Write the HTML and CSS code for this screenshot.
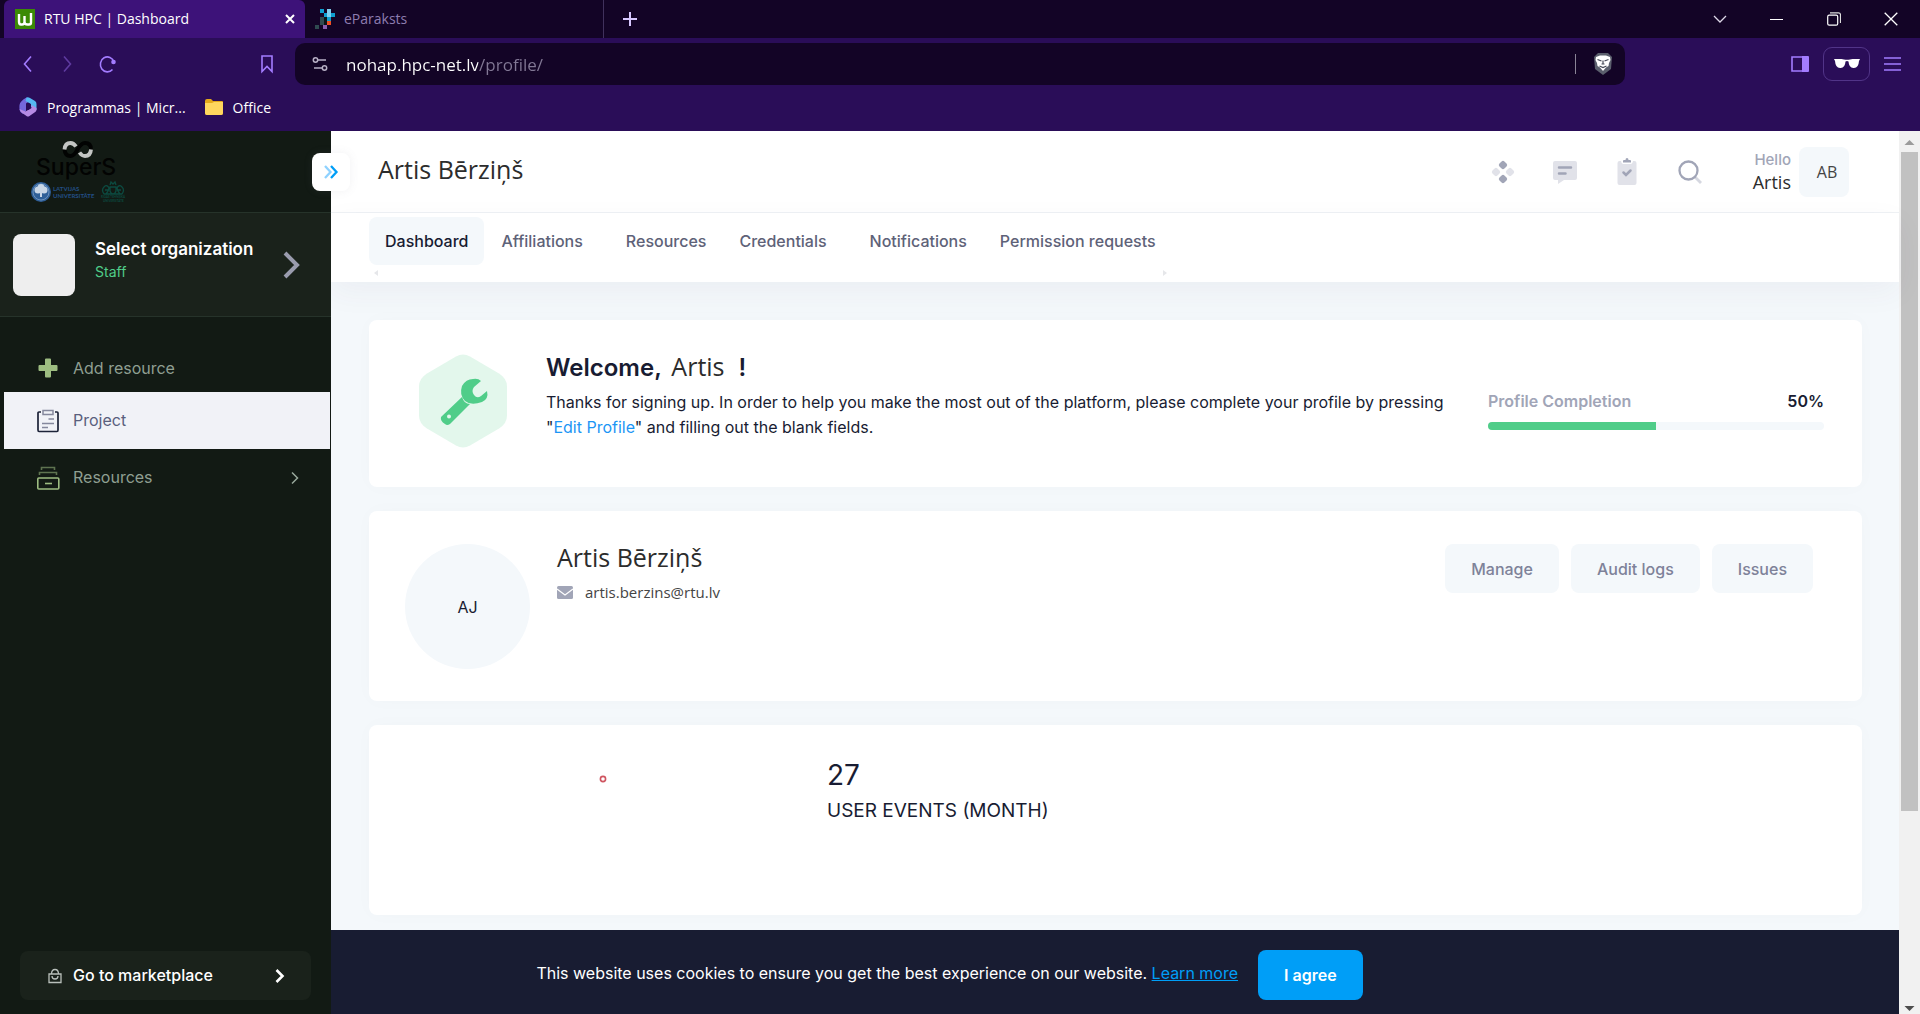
FILE: index.html
```html
<!DOCTYPE html>
<html lang="en">
<head>
<meta charset="utf-8">
<title>RTU HPC | Dashboard</title>
<link rel="stylesheet" href="styles.css">
</head>
<body>
<div class="browser">
  <header class="chrome">
    <div class="tabstrip">
      <div class="tab tab-active">
        <svg class="tab-icon" width="20" height="20" viewBox="0 0 20 20"><rect width="20" height="20" fill="#3b8a05"/><path d="M4 5v7.500q0 3 2 3h1q2.500 0 2.500-2.500V7M9.500 13q0 2.500 3 2.500H14q2 0 2-2V4" fill="none" stroke="#fff" stroke-width="2.400"/></svg>
        <span class="tab-title">RTU HPC | Dashboard</span>
        <button class="tab-close" aria-label="Close tab"><svg width="10" height="10" viewBox="0 0 10 10"><path d="M1 1l8 8M9 1l-8 8" stroke="#fff" stroke-width="2"/></svg></button>
      </div>
      <div class="tab">
        <svg class="tab-icon" width="20" height="20" viewBox="0 0 20 20" shape-rendering="crispEdges"><path fill="#0d9fd0" d="M5 0h4v4H5zM9 4h3v4H9zM16 4h4v4h-4zM12 8h4v4h-4z"/><path fill="#7fd0f0" d="M12 0h4v8h-4z"/><path fill="#2f4a50" d="M5 8h4v8H5zM0 16h4v4H0z"/><path fill="#0b1416" d="M9 8h3v8H9z"/><path fill="#f04e23" d="M12 12h4v4h-4z"/><path fill="#8a5fb0" d="M8 16h4v4H8z"/></svg>
        <span class="tab-title">eParaksts</span>
      </div>
      <button class="new-tab" aria-label="New tab"><svg width="14" height="14" viewBox="0 0 14 14"><path d="M7 0v14M0 7h14" stroke="#d8c8ff" stroke-width="2"/></svg></button>
      <div class="window-buttons">
        <button aria-label="Search tabs"><svg width="14" height="14" viewBox="0 0 14 14"><path d="M1 4l6 6 6-6" fill="none" stroke="#ddd8e8" stroke-width="1.3"/></svg></button>
        <button aria-label="Minimize"><svg width="14" height="14" viewBox="0 0 14 14"><path d="M0 7.500h13" stroke="#fff"/></svg></button>
        <button aria-label="Restore"><svg width="14" height="14" viewBox="0 0 14 14"><rect x=".7" y="3.200" width="10" height="10" rx="1.500" fill="none" stroke="#fff" stroke-width="1.200"/><path d="M3 .9h8.500a2 2 0 0 1 2 2V11" fill="none" stroke="#ddd" stroke-width="1.200"/></svg></button>
        <button aria-label="Close"><svg width="14" height="14" viewBox="0 0 14 14"><path d="M.7.7l12.600 12.600M13.300.7L.7 13.300" stroke="#fff" stroke-width="1.300"/></svg></button>
      </div>
    </div>
    <div class="toolbar">
      <div class="nav-buttons">
        <button aria-label="Back"><svg width="20" height="20" viewBox="0 0 20 20"><path d="M13 2.500L6.500 10l6.500 7.500" fill="none" stroke="#a37cff" stroke-width="1.600"/></svg></button>
        <button aria-label="Forward"><svg width="20" height="20" viewBox="0 0 20 20"><path d="M6 2.500l6.500 7.500L6 17.500" fill="none" stroke="#5f3ba0" stroke-width="1.600"/></svg></button>
        <button aria-label="Reload"><svg width="20" height="20" viewBox="0 0 20 20"><path d="M16 8A7 7.500 0 1 0 14.500 15.500" fill="none" stroke="#a37cff" stroke-width="1.600"/><circle cx="15.500" cy="8" r="2.300" fill="#a37cff"/></svg></button>
        <button class="bookmark-button" aria-label="Bookmark this page"><svg width="20" height="20" viewBox="0 0 20 20"><path d="M5 2h10v15.500l-5-5-5 5z" fill="none" stroke="#a37cff" stroke-width="1.600"/></svg></button>
      </div>
      <div class="address">
        <svg width="18" height="18" viewBox="0 0 18 18" fill="none" stroke="#b8b0c6" stroke-width="1.500"><circle cx="4.500" cy="5" r="2.200"/><path d="M7 5h8M3 13h8"/><circle cx="13.500" cy="13" r="2.200"/></svg>
        <input class="address-input" type="text" aria-label="Address" value="nohap.hpc-net.lv/profile/">
        <span class="address-divider"></span>
        <svg width="20" height="24" viewBox="0 0 20 24"><path d="M5 1h10l2 2 2 2-1 12-8 6-8-6L1 5l2-2z" fill="#5b5f6d"/><path d="M3 5l4-1.500h6L17 5l.5 3-1.500 3-.5 3-2.500 1.500L10 19l-3-3.500L4.500 14 4 11 2.500 8z" fill="#fff"/><path d="M4.500 7.500l4 1.500M15.500 7.500l-4 1.500M6.500 14l3.500 1.500 3.500-1.500M10 8.500v4M8.500 12h3" fill="none" stroke="#454957" stroke-width="1.200"/></svg>
      </div>
      <div class="tool-buttons">
        <button aria-label="Sidebar"><svg width="18" height="16" viewBox="0 0 18 16"><path d="M1 1h11v14H1z" fill="none" stroke="#a37cff" stroke-width="1.600"/><path d="M11 0h6q1 0 1 1v14q0 1-1 1h-6z" fill="#a37cff"/></svg></button>
        <button class="private" aria-label="Private window"><svg width="26" height="10" viewBox="0 0 26 10"><path d="M0 0q5-.6 10 .4 3 .8 6 0 5-1 10-.4l-1 2q-.5 7-5 7-5 .5-5.500-6.500Q13 1.500 11.500 2.500 11 9.500 6 9 1.500 9 1 2z" fill="#fff"/></svg></button>
        <button aria-label="Menu"><svg width="17" height="14" viewBox="0 0 17 14"><path d="M0 1h17M0 7h17M0 13h17" stroke="#a37cff" stroke-width="1.500"/></svg></button>
      </div>
    </div>
    <nav class="bookmarks" aria-label="Bookmarks">
      <a href="#"><svg width="20" height="20" viewBox="0 0 20 20"><path d="M8.500.5L13 3 8 6.500V14l-3 3-2.500-2Q1 13 1.500 8 2 4 8.500.5z" fill="#7468dc"/><path d="M8.500.5Q10-.2 12 1l5 3q1.500 1 1.500 3v6l-5.500-3V7L7.500 4z" fill="#55b8f2"/><path d="M18.500 11q.5 3-2 4.500L11.500 19q-1.500 1-3 0l-5-3.500Q2 14 1.500 12l6 2.500 6-3.500V8z" fill="#b68ae4"/><path d="M8 7.500l2.500-1.500 2.500 1.500v3.500L10.500 13 8 11.500z" fill="#2a0d58"/></svg><span>Programmas | Micr...</span></a>
      <a href="#"><svg width="20" height="18" viewBox="0 0 20 18"><path d="M1 3q0-2 2-2h4l2 2h9q1 0 1 1v11q0 2-2 2H3q-2 0-2-2z" fill="#e5a91a"/><path d="M1 5h7l2-1h9v11q0 2-2 2H3q-2 0-2-2z" fill="#ffd75e"/></svg><span>Office</span></a>
    </nav>
  </header>

  <div class="viewport">
    <aside class="sidebar">
      <a class="brand" href="#" aria-label="SuperS">
        <svg width="96" height="64" viewBox="0 0 96 64">
          <g fill="none" stroke-width="3.800"><path d="M33.500 9.500q.5 6.500 6 6.500 3.500 0 7-6.500t7.500-6.500q6 0 6 6.500" stroke="#020302"/><path d="M33.500 9.500q.5-6.500 6-6.500 3 0 5.500 3.500" stroke="#c4c6c4"/><path d="M48.500 12.500q2.500 3.500 5.500 3.500 5.500 0 6-6.500" stroke="#c4c6c4"/></g>
          <text class="brand-name" x="5" y="35">SuperS</text>
          <circle cx="10" cy="52" r="10" fill="#2f5f98"/><circle cx="10" cy="52" r="8" fill="none" stroke="#7d9fc6" stroke-width=".8"/><circle cx="7" cy="50" r="3.500" fill="#c9d6e6"/><circle cx="13" cy="50" r="3.500" fill="#c9d6e6"/><circle cx="10" cy="47.500" r="3.500" fill="#c9d6e6"/><path d="M9 51h2v6H9z" fill="#c9d6e6"/>
          <text class="brand-lu" x="22" y="51">LATVIJAS</text><text class="brand-lu" x="22" y="58">UNIVERSITĀTE</text>
          <g fill="none" stroke="#0c4a40" stroke-width="1.300"><path d="M73 54q-3-4 0-7t5 1q-1 4-3 6M91 54q3-4 0-7t-5 1q1 4 3 6M79 47h6v4q-1 3-3 3t-3-3zM79 45l1-3 2 2 2-2 1 3M74 50h4M86 50h4M73 54h18"/></g>
          <text class="brand-rtu" x="70" y="58">RĪGAS TEHNISKĀ</text><text class="brand-rtu" x="72" y="62">UNIVERSITĀTE</text>
        </svg>
      </a>
      <button class="organization">
        <span class="org-image"></span>
        <span class="org-text"><strong>Select organization</strong><small>Staff</small></span>
        <svg width="18" height="28" viewBox="0 0 18 28"><path d="M2 2l12 12L2 26" fill="none" stroke="#9a9cae" stroke-width="4"/></svg>
      </button>
      <nav class="menu" aria-label="Main">
        <a class="menu-item" href="#"><svg width="24" height="24" viewBox="0 0 24 24"><path d="M9 3.500q0-1 1-1h4q1 0 1 1V9h5.500q1 0 1 1v4q0 1-1 1H15v5.500q0 1-1 1h-4q-1 0-1-1V15H3.500q-1 0-1-1v-4q0-1 1-1H9z" fill="#9dbd81"/></svg><span>Add resource</span></a>
        <a class="menu-item menu-active" href="#"><svg width="24" height="24" viewBox="0 0 24 24" fill="none"><path d="M5 3H3q-1 0-1 1v17q0 1.500 1 1.500h18q1 0 1-1.500V4q0-1-1-1h-2" stroke="#1d2338" stroke-width="1.700"/><path d="M7 1.500h10v4H7zM12.500 10H18M6 14.500h12M6 18.500h6" stroke="#85889d" stroke-width="1.500"/></svg><span>Project</span></a>
        <a class="menu-item" href="#"><svg width="24" height="24" viewBox="0 0 24 24" fill="none" stroke="#9dbd81" stroke-width="1.600"><path d="M5.500 4V1.500h13V4M3.500 9V6.500h17V9" opacity=".55"/><rect x="1.800" y="12" width="21" height="11" rx="1"/><path d="M9 17.500h7"/></svg><span>Resources</span><svg class="menu-arrow" width="8" height="14" viewBox="0 0 8 14"><path d="M1 1.500L6.500 7 1 12.500" fill="none" stroke="#98a89b" stroke-width="1.500"/></svg></a>
      </nav>
      <a class="marketplace" href="#"><svg width="14" height="16" viewBox="0 0 14 16" fill="none" stroke="#b9c0bb" stroke-width="1.300"><path d="M1 6h12v8.500H1z"/><path d="M3.500 6q0-4.500 3.500-4.500T10.500 6M4 8q0 3 3 3t3-3"/></svg><span>Go to marketplace</span><svg width="10" height="16" viewBox="0 0 10 16"><path d="M1.500 2l6 6-6 6" fill="none" stroke="#fff" stroke-width="2.600"/></svg></a>
      <button class="sidebar-toggle" aria-label="Toggle sidebar"><svg width="16" height="16" viewBox="0 0 16 16" fill="none" stroke-width="2.300"><path d="M2 2l5.500 6L2 14" stroke="#8fd2ff"/><path d="M8 2l5.500 6L8 14" stroke="#009ef7"/></svg></button>
    </aside>

    <main class="main">
      <div class="header">
        <h1 class="person-name">Artis Bērziņš</h1>
        <div class="header-tools">
          <button aria-label="Quick actions"><svg width="24" height="24" viewBox="0 0 24 24"><g fill="#a1a5b7"><rect x="8.500" y="1.500" width="7" height="7" rx="2" transform="rotate(45 12 5)"/><rect x="8.500" y="15.500" width="7" height="7" rx="2" transform="rotate(45 12 19)"/></g><g fill="#e1e2e9"><rect x="1.500" y="8.500" width="7" height="7" rx="2" transform="rotate(45 5 12)"/><rect x="15.500" y="8.500" width="7" height="7" rx="2" transform="rotate(45 19 12)"/></g></svg></button>
          <button aria-label="Messages"><svg width="24" height="24" viewBox="0 0 24 24"><path d="M2 1h20q2 0 2 2v15q0 2-2 2H11l-6 4v-4H2q-2 0-2-2V3q0-2 2-2z" fill="#e1e2e9"/><path d="M6 7.500h12M6 13.500h6.500" stroke="#a1a5b7" stroke-width="2.500" stroke-linecap="round"/></svg></button>
          <button aria-label="Pending tasks"><svg width="24" height="28" viewBox="0 0 24 28"><path d="M4.500 3H6q.5 3 2.500 3h7q2 0 2.500-3h1.500q2 0 2 2v20q0 2-2 2h-15q-2 0-2-2V5q0-2 2-2z" fill="#e1e2e9"/><path d="M8 4.500V3q0-1 1-1h1.500q0-2 1.500-2t1.500 2H15q1 0 1 1v1.500z" fill="#a1a5b7"/><path d="M8.500 14.500l2.500 2.500 4.500-4.500" fill="none" stroke="#a1a5b7" stroke-width="2.500" stroke-linecap="round"/></svg></button>
          <button aria-label="Search"><svg width="26" height="26" viewBox="0 0 26 26" fill="none"><path d="M18 18l6 6" stroke="#d5d7e0" stroke-width="2.800"/><circle cx="11.500" cy="11.500" r="9" stroke="#a1a5b7" stroke-width="2.300"/></svg></button>
        </div>
        <div class="greeting"><span class="hello">Hello</span><span class="greeting-name">Artis</span></div>
        <button class="avatar-small">AB</button>
      </div>
      <div class="subheader">
        <div class="tabs-scroller">
          <nav class="tabs" aria-label="Profile">
            <a class="tabs-link tabs-active" href="#">Dashboard</a>
            <a class="tabs-link" href="#">Affiliations</a>
            <a class="tabs-link tabs-spaced" href="#">Resources</a>
            <a class="tabs-link" href="#">Credentials</a>
            <a class="tabs-link tabs-spaced" href="#">Notifications</a>
            <a class="tabs-link" href="#">Permission requests</a>
          </nav>
          <div class="tabs-arrows" aria-hidden="true">
            <svg width="4" height="6" viewBox="0 0 4 6"><path d="M4 0v6L0 3z" fill="#e6e7ea"/></svg>
            <svg width="4" height="6" viewBox="0 0 4 6"><path d="M0 0v6l4-3z" fill="#e6e7ea"/></svg>
          </div>
        </div>
      </div>
      <div class="content">
        <section class="card welcome">
          <svg class="welcome-icon" width="88" height="94" viewBox="0 0 88 94"><path d="M37 2.500q7-4 14 0l29 17q8 5 8 13v29q0 8-8 13l-29 17q-7 4-14 0l-29-17q-8-5-8-13v-29q0-8 8-13z" fill="#e3f7ec"/><path d="M54 25q5-1 8 2l-7 6q-3 4 0 8 3 4 7 1l6-5q2 8-5 11-11 4-17-1-6-6-3-15 4-7 11-7z" fill="#50cd89"/><path fill-rule="evenodd" d="M43 43q2 7 8 7L31 70q-3 2-5 0-5-3-4-7zM30 60.500a2 2 0 1 0 0 4 2 2 0 0 0 0-4z" fill="#50cd89"/></svg>
          <div class="welcome-text">
            <h2>Welcome, <span class="welcome-name">Artis</span> !</h2>
            <p>Thanks for signing up. In order to help you make the most out of the platform, please complete your profile by pressing "<a href="#">Edit Profile</a>" and filling out the blank fields.</p>
          </div>
          <div class="completion">
            <div class="completion-label"><span>Profile Completion</span><strong>50%</strong></div>
            <div class="progress"><div class="progress-value" style="width:50%"></div></div>
          </div>
        </section>
        <section class="card profile">
          <div class="avatar">AJ</div>
          <div class="profile-text">
            <h2 class="person-name">Artis Bērziņš</h2>
            <p class="email"><svg width="16" height="13" viewBox="0 0 16 13"><rect width="16" height="13" rx="1.500" fill="#a1a5b7"/><path d="M0 3l8 6 8-6" fill="none" stroke="#fff" stroke-width="1.200"/></svg>artis.berzins@rtu.lv</p>
          </div>
          <div class="profile-actions"><button>Manage</button><button>Audit logs</button><button>Issues</button></div>
        </section>
        <section class="card stats">
          <div class="chart"><svg width="8" height="8" viewBox="0 0 8 8"><circle cx="4" cy="4" r="2.600" fill="#fff" stroke="#cf5560" stroke-width="1.600"/></svg></div>
          <div class="stat"><strong>27</strong><span>USER EVENTS (MONTH)</span></div>
        </section>
      </div>
      <div class="cookies">
        <p>This website uses cookies to ensure you get the best experience on our website. <a href="#">Learn more</a></p>
        <button>I agree</button>
      </div>
    </main>
    <div class="scrollbar" aria-hidden="true">
      <svg width="21" height="21" viewBox="0 0 21 21"><path d="M5.500 14L10.500 9l5 5z" fill="#9b9b9b"/></svg>
      <div class="scrollbar-track"><div class="scrollbar-thumb" style="height:77.5%"></div></div>
      <svg width="21" height="12" viewBox="0 0 21 12"><path d="M5.500 4l5 5 5-5z" fill="#4d4d4d"/></svg>
    </div>
  </div>
</div>
</body>
</html>
```

FILE: styles.css
```css
* { box-sizing: border-box; }
body { margin: 0; font-family: Inter, "Liberation Sans", sans-serif; font-size: 16px; color: #181c32; }
button { border: 0; padding: 0; background: none; font: inherit; color: inherit; display: flex; align-items: center; justify-content: center; }
a { color: inherit; text-decoration: none; }
h1, h2, p { margin: 0; font-weight: 400; }
svg { flex: none; display: block; }

.browser { min-height: 100vh; display: flex; flex-direction: column; }

/* Browser window frame */
.chrome { background: #2a0d58; font-family: "Open Sans", "Noto Sans", sans-serif; font-size: 14px; color: #fff; }
.tabstrip { height: 38px; display: flex; background: #130426; padding-left: 4px; }
.tab { width: 301px; display: flex; align-items: center; gap: 9px; padding: 0 10px 0 11px; color: #8e7db0; border-radius: 6px 6px 0 0; }
.tab + .tab { width: 299px; padding-left: 10px; border-right: 1px solid #40315c; border-radius: 0; }
.tab-active { background: #3d1279; color: #fff; }
.tab-title { flex: 1; padding-bottom: 2px; }
.new-tab { width: 52px; }
.window-buttons { margin-left: auto; display: flex; padding-right: 1px; }
.window-buttons button { width: 57px; }
.toolbar { height: 52px; display: flex; align-items: center; }
.nav-buttons { width: 295px; display: flex; padding-left: 8px; }
.nav-buttons button { width: 40px; height: 40px; }
.bookmark-button { margin: 0 8px 0 auto; }
.address { width: 1330px; flex-shrink: 1; height: 42px; display: flex; align-items: center; gap: 17px; padding: 0 12px 0 16px; background: #130426; border-radius: 10px; }
.address-input { flex: 1; min-width: 0; border: 0; padding: 0; outline: 0; height: 42px; font: 17px "Open Sans", "Noto Sans", sans-serif; color: transparent; background: linear-gradient(90deg, #fff 132px, #827895 132px); -webkit-background-clip: text; background-clip: text; }
.address-divider { width: 1px; height: 20px; background: #8a8496; }
.tool-buttons { margin-left: auto; display: flex; align-items: center; gap: 14px; padding-right: 19px; }
.private { width: 47px; height: 34px; border: 1px solid #513488; border-radius: 9px; }
.bookmarks { height: 41px; display: flex; align-items: center; gap: 18px; padding: 0 18px 7px; }
.bookmarks a { display: flex; align-items: center; gap: 9px; }

.viewport { flex: 1; display: flex; min-width: 0; }

/* Sidebar */
.sidebar { position: relative; z-index: 2; flex: none; width: 331px; display: flex; flex-direction: column; background: #121a14; color: #8f9f92; }
.brand { height: 82px; padding: 9px 31px; border-bottom: 1px solid #26332a; }
.brand-name { font: 500 23px Inter, sans-serif; fill: #020302; }
.brand-lu { font: 700 6px Lato, sans-serif; fill: #234f86; }
.brand-rtu { font: 700 3px Lato, sans-serif; fill: #0c4a40; }
.organization { height: 104px; padding: 0 30px 0 13px; gap: 20px; background: #1a221b; border-bottom: 1px solid #26332a; text-align: left; }
.org-image { width: 62px; height: 62px; background: #eee; border-radius: 8px; }
.org-text { flex: 1; display: flex; flex-direction: column; gap: 4px; padding-bottom: 10px; }
.org-text strong { font-size: 17px; line-height: 20px; font-weight: 600; color: #fff; }
.org-text small { font-size: 14px; line-height: 18px; color: #50cd89; }
.menu { padding-top: 27px; display: flex; flex-direction: column; }
.menu-item { height: 57px; margin: 0 1px 0 4px; padding: 0 31px 0 32px; display: flex; align-items: center; gap: 13px; }
.menu-item:first-child { height: 48px; }
.menu-item span { padding-bottom: 1px; }
.menu-active { background: #f1f2f7; color: #5a5f7d; }
.menu-arrow { margin-left: auto; }
.marketplace { height: 49px; margin: auto 20px 14px; padding: 0 26px 0 28px; display: flex; align-items: center; gap: 11px; border-radius: 8px; background: #1a221b; color: #fff; font-weight: 500; }
.marketplace span { flex: 1; padding-bottom: 2px; }
.sidebar-toggle { position: absolute; right: -19px; top: 22px; width: 38px; height: 38px; border-radius: 8px; background: #fff; box-shadow: 0 0 10px rgba(113, 121, 136, .1); }

/* Page header */
.main { flex: 1; min-width: 0; display: flex; flex-direction: column; background: #f4f8fb; }
.header { height: 82px; padding: 0 50px 0 47px; display: flex; align-items: center; background: #fff; border-bottom: 1px solid #eff2f5; }
.person-name { font: 25px/26px "Open Sans", "Noto Sans", sans-serif; color: #2c2c2c; padding-bottom: 6px; }
.header-tools { margin-left: auto; display: flex; gap: 38px; }
.greeting { margin-left: 50px; margin-right: 8px; display: flex; flex-direction: column; align-items: flex-end; }
.hello { font-size: 15px; line-height: 20px; color: #a1a5b7; font-weight: 500; }
.greeting-name { font: 18px/24px "Open Sans", "Noto Sans", sans-serif; color: #2c2c2c; }
.avatar-small { width: 50px; height: 50px; border-radius: 8px; background: #f4f8fb; font-family: "Open Sans", "Noto Sans", sans-serif; color: #444; padding-left: 6px; }
.subheader { position: relative; height: 69px; padding: 4px 38px 0; display: flex; background: #fff; box-shadow: 0 10px 30px rgba(82, 63, 105, .05); }
.tabs { display: flex; gap: 1px; }
.tabs-link { height: 48px; padding: 0 16px; display: flex; align-items: center; border-radius: 8px; font-weight: 500; color: #5e6278; }
.tabs-active { background: #f4f8fb; color: #181c32; }
.tabs-spaced { margin-left: 10px; }
.tabs-arrows { display: flex; justify-content: space-between; padding: 5px 5px 0; }

/* Cards */
.content { flex: 1; padding: 38px 37px 15px 38px; display: flex; flex-direction: column; gap: 24px; }
.card { display: flex; background: #fff; border-radius: 8px; box-shadow: 0 0 20px rgba(76, 87, 125, .02); }
.welcome { height: 167px; padding: 34px 38px 0 50px; }
.welcome-icon { margin-right: 39px; }
.welcome-text { flex: 1; }
.welcome-text h2 { font-size: 24px; line-height: 24px; font-weight: 600; margin-bottom: 10px; }
.welcome-name { font: 25px/24px "Open Sans", "Noto Sans", sans-serif; color: #2c2c2c; margin: 0 8px 0 4px; }
.welcome-text p { line-height: 25px; }
.welcome-text a { color: #1b95f5; }
.completion { width: 336px; margin-left: 24px; padding-top: 34px; }
.completion-label { display: flex; justify-content: space-between; line-height: 26px; font-weight: 600; color: #a1a5b7; }
.completion-label strong { font-weight: 600; color: #181c32; }
.progress { height: 8px; margin-top: 8px; border-radius: 4px; background: #f4f8fb; overflow: hidden; }
.progress-value { height: 8px; background: #50cd89; }
.profile { height: 190px; padding: 33px 49px 0 36px; }
.avatar { width: 125px; height: 125px; border-radius: 50%; background: #f4f8fb; display: flex; align-items: center; justify-content: center; }
.profile-text { flex: 1; margin-left: 27px; }
.email { display: flex; align-items: center; gap: 12px; font: 15px/32px "Open Sans", "Noto Sans", sans-serif; color: #444; }
.profile-actions { display: flex; gap: 12px; height: 49px; }
.profile-actions button { padding: 0 26px; border-radius: 8px; background: #f4f8fb; color: #7e8299; font-weight: 500; }
.stats { height: 190px; padding: 32px 36px; }
.chart { width: 422px; padding: 18px 0 0 194px; }
.stat { display: flex; flex-direction: column; gap: 2px; }
.stat strong { font-size: 28px; line-height: 36px; font-weight: 400; }
.stat span { font-size: 19px; line-height: 32px; }

/* Cookie consent */
.cookies { height: 84px; padding: 5px 331px 0 0; display: flex; align-items: center; justify-content: center; gap: 20px; background: #181c32; color: #fff; }
.cookies p { padding-bottom: 3px; }
.cookies a { color: #009ef7; text-decoration: underline; }
.cookies button { height: 50px; padding: 0 26px; border-radius: 8px; background: #009ef7; font-weight: 600; }

.scrollbar { flex: none; width: 21px; background: #f1f1f1; display: flex; flex-direction: column; }
.scrollbar-track { flex: 1; padding: 0 2px; }
.scrollbar-thumb { background: #c1c1c1; }
```
